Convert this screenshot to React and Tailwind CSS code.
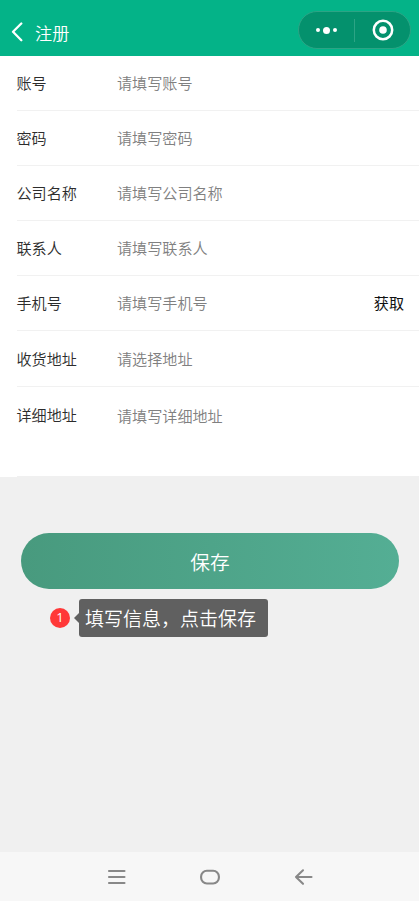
import React from "react";

const fields = [
  { label: "账号", placeholder: "请填写账号", height: "h-[55px]" },
  { label: "密码", placeholder: "请填写密码", height: "h-[55px]" },
  { label: "公司名称", placeholder: "请填写公司名称", height: "h-[55px]" },
  { label: "联系人", placeholder: "请填写联系人", height: "h-[55px]" },
  { label: "手机号", placeholder: "请填写手机号", height: "h-[55px]", action: "获取" },
  { label: "收货地址", placeholder: "请选择地址", height: "h-14" },
];

const Header = () => {
  return (
    <header className="flex h-14 items-center justify-between bg-[#04b388] pl-[11px] pr-2 text-white">
      <div className="flex items-center pt-2">
        <svg className="h-5 w-3" viewBox="0 0 12 20" fill="none" stroke="currentColor" strokeWidth="2.3" strokeLinecap="round" strokeLinejoin="round">
          <path d="M10.3 1.5 L2 9.7 L10.3 18.2" />
        </svg>
        <h1 className="ml-3 pt-0.5 text-[17.2px] leading-6">注册</h1>
      </div>
      <div className="mt-1 flex h-[38px] w-[113px] items-center rounded-full border border-[#2ca485] bg-[#04916d]">
        <button className="flex h-full w-[55px] items-center justify-center gap-[3px]">
          <span className="h-1 w-1 rounded-full bg-white" />
          <span className="h-[7px] w-[7px] rounded-full bg-white" />
          <span className="h-1 w-1 rounded-full bg-white" />
        </button>
        <span className="h-[23px] w-px bg-[#2ca485]" />
        <button className="flex h-full flex-1 items-center justify-center">
          <svg className="h-[22px] w-[22px]" viewBox="0 0 22 22">
            <circle cx="11" cy="11" r="9.2" fill="none" stroke="white" strokeWidth="2.5" />
            <circle cx="11" cy="11" r="3.8" fill="white" />
          </svg>
        </button>
      </div>
    </header>
  );
};

const Field = ({ field }) => {
  return (
    <label className={`${field.height} flex items-center border-b border-[#f1f1f1] pb-0.5 pr-[15px]`}>
      <span className="w-[100.5px] text-[#2c2c2c]">{field.label}</span>
      <input
        type="text"
        className="min-w-0 flex-1 outline-none placeholder:text-[#808080] placeholder:opacity-100"
        placeholder={field.placeholder}
      />
      {field.action && <button className="font-normal text-[#111]">{field.action}</button>}
    </label>
  );
};

const NavBar = () => {
  return (
    <nav className="flex h-[49px] items-center justify-center gap-[73px] bg-[#f7f7f7] text-[#888]">
      <svg className="h-5 w-5" viewBox="0 0 20 20" stroke="currentColor" strokeWidth="2.1" strokeLinecap="round">
        <path d="M2 4 H17.5 M2 10 H17.5 M2 16 H17.5" />
      </svg>
      <svg className="h-5 w-5" viewBox="0 0 20 20" fill="none" stroke="currentColor" strokeWidth="2.1">
        <rect x="1.1" y="3.7" width="17.8" height="12.8" rx="5.8" />
      </svg>
      <svg className="h-5 w-5" viewBox="0 0 20 20" fill="none" stroke="currentColor" strokeWidth="2.1" strokeLinecap="round" strokeLinejoin="round">
        <path d="M10 3.3 L3 10 L10 16.8 M3 10 H18.5" />
      </svg>
    </nav>
  );
};

const App = () => {
  return (
    <div className="flex h-[901px] w-full flex-col overflow-hidden bg-[#f0f0f0] font-['Noto_Sans_CJK_SC',sans-serif] font-[350]">
      <Header />
      <form className="bg-white pl-[16.5px] text-[15.1px] leading-6">
        {fields.map((field) => (
          <Field key={field.label} field={field} />
        ))}
        <label className="flex h-[90px] items-start border-b border-[#f0f0f0] pt-[15px]">
          <span className="w-[100.5px] text-[#2c2c2c]">详细地址</span>
          <textarea
            className="mt-px h-14 flex-1 resize-none outline-none placeholder:text-[#808080] placeholder:opacity-100"
            placeholder="请填写详细地址"
          />
        </label>
      </form>

      <main className="flex-1 pt-14">
        <button className="ml-[21px] flex h-14 w-[378px] items-center justify-center rounded-full bg-linear-to-r from-[#489a7e] to-[#54ae94] pt-0.5 text-[19.7px] text-white">
          保存
        </button>
        <div className="ml-[50px] mt-2.5 flex items-center">
          <span className="flex h-5 w-5 items-center justify-center rounded-full bg-[#ff3838] pb-px font-['Open_Sans',sans-serif] text-[13px] font-normal leading-none text-white">
            1
          </span>
          <svg className="ml-1 h-3 w-[5px]" viewBox="0 0 5 12">
            <path d="M5 1 L0 6 L5 11 Z" fill="#606060" />
          </svg>
          <p className="h-[38px] w-[189px] whitespace-nowrap rounded-[3px] bg-[#606060] pl-1.5 text-[19px] leading-[38px] text-white">
            填写信息，点击保存
          </p>
        </div>
      </main>
      <NavBar />
    </div>
  );
};

export default App;
